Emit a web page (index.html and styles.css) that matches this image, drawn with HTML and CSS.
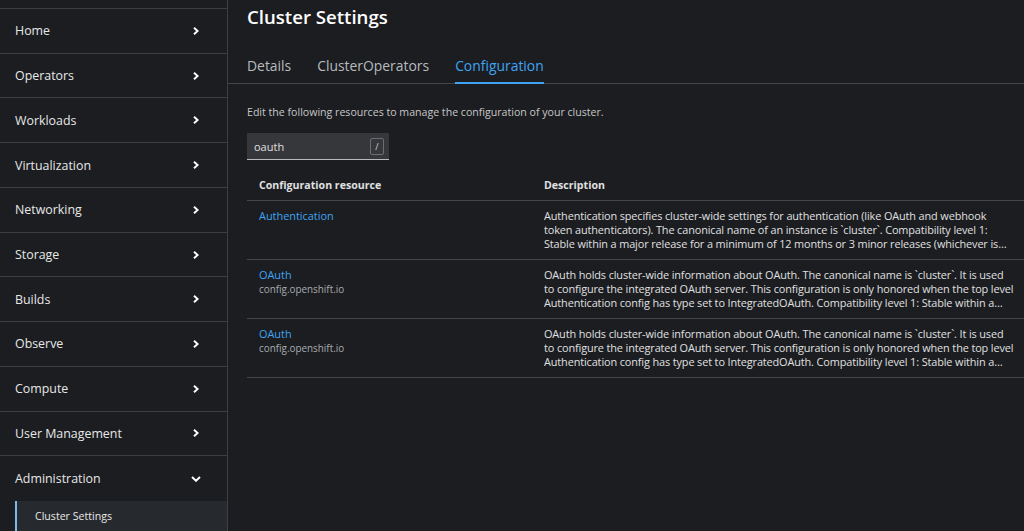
FILE: index.html
```html
<!DOCTYPE html>
<html>
<head>
<meta charset="utf-8">
<link rel="stylesheet" href="styles.css">
</head>
<body>
<div class="app">
  <nav class="sidebar">
    <div class="nav-top"></div>
    <div class="nav-item"><span>Home</span><svg class="chev" viewBox="0 0 6 8"><path d="M1 0.7 L4.6 4 L1 7.3" /></svg></div>
    <div class="nav-item"><span>Operators</span><svg class="chev" viewBox="0 0 6 8"><path d="M1 0.7 L4.6 4 L1 7.3" /></svg></div>
    <div class="nav-item"><span>Workloads</span><svg class="chev" viewBox="0 0 6 8"><path d="M1 0.7 L4.6 4 L1 7.3" /></svg></div>
    <div class="nav-item"><span>Virtualization</span><svg class="chev" viewBox="0 0 6 8"><path d="M1 0.7 L4.6 4 L1 7.3" /></svg></div>
    <div class="nav-item"><span>Networking</span><svg class="chev" viewBox="0 0 6 8"><path d="M1 0.7 L4.6 4 L1 7.3" /></svg></div>
    <div class="nav-item"><span>Storage</span><svg class="chev" viewBox="0 0 6 8"><path d="M1 0.7 L4.6 4 L1 7.3" /></svg></div>
    <div class="nav-item"><span>Builds</span><svg class="chev" viewBox="0 0 6 8"><path d="M1 0.7 L4.6 4 L1 7.3" /></svg></div>
    <div class="nav-item"><span>Observe</span><svg class="chev" viewBox="0 0 6 8"><path d="M1 0.7 L4.6 4 L1 7.3" /></svg></div>
    <div class="nav-item"><span>Compute</span><svg class="chev" viewBox="0 0 6 8"><path d="M1 0.7 L4.6 4 L1 7.3" /></svg></div>
    <div class="nav-item"><span>User Management</span><svg class="chev" viewBox="0 0 6 8"><path d="M1 0.7 L4.6 4 L1 7.3" /></svg></div>
    <div class="nav-item expanded"><span>Administration</span><svg class="chev-down" viewBox="0 0 10 6"><path d="M1 1 L5 4.8 L9 1" /></svg></div>
    <div class="subnav">
      <div class="sub-item active">Cluster Settings</div>
    </div>
  </nav>
  <main class="main">
    <h1 class="title">Cluster Settings</h1>
    <div class="tabs">
      <div class="tab">Details</div>
      <div class="tab">ClusterOperators</div>
      <div class="tab active">Configuration</div>
    </div>
    <section class="content">
      <p class="intro">Edit the following resources to manage the configuration of your cluster.</p>
      <div class="search">
        <span class="search-text">oauth</span>
        <span class="kbd">/</span>
      </div>
      <table class="table">
        <thead>
          <tr><th class="col1">Configuration resource</th><th>Description</th></tr>
        </thead>
        <tbody>
          <tr>
            <td class="col1"><a class="link">Authentication</a></td>
            <td class="desc"><div class="clamp">Authentication specifies cluster-wide settings for authentication (like OAuth and webhook<br>token authenticators). The canonical name of an instance is `cluster`. Compatibility level 1:<br>Stable within a major release for a minimum of 12 months or 3 minor releases (whichever is longer).</div></td>
          </tr>
          <tr>
            <td class="col1"><a class="link">OAuth</a><div class="group">config.openshift.io</div></td>
            <td class="desc"><div class="clamp">OAuth holds cluster-wide information about OAuth. The canonical name is `cluster`. It is used<br>to configure the integrated OAuth server. This configuration is only honored when the top level<br>Authentication config has type set to IntegratedOAuth. Compatibility level 1: Stable within a major release.</div></td>
          </tr>
          <tr>
            <td class="col1"><a class="link">OAuth</a><div class="group">config.openshift.io</div></td>
            <td class="desc"><div class="clamp">OAuth holds cluster-wide information about OAuth. The canonical name is `cluster`. It is used<br>to configure the integrated OAuth server. This configuration is only honored when the top level<br>Authentication config has type set to IntegratedOAuth. Compatibility level 1: Stable within a major release.</div></td>
          </tr>
        </tbody>
      </table>
    </section>
  </main>
</div>
</body>
</html>
```

FILE: styles.css
```css
* { box-sizing: border-box; }
html, body {
  margin: 0;
  padding: 0;
  background: #1b1d21;
  color: #e0e0e0;
  font-family: "Open Sans", "Noto Sans", sans-serif;
  height: 531px;
  overflow: hidden;
}
.app {
  display: flex;
  height: 531px;
}
.sidebar {
  width: 228px;
  flex: none;
  background: #1b1d21;
  border-right: 1px solid #3c3f42;
  display: flex;
  flex-direction: column;
}
.nav-top {
  height: 9px;
  border-bottom: 1px solid #3c3f42;
}
.nav-item {
  height: 44.8px;
  border-bottom: 1px solid #3c3f42;
  display: flex;
  align-items: center;
  justify-content: space-between;
  padding: 0 28px 0 15px;
  font-size: 12.4px;
  color: #e8e8e8;
}
.nav-item.expanded { border-bottom: none; }
.chev {
  width: 6px;
  height: 8px;
  fill: none;
  stroke: #ffffff;
  stroke-width: 1.9;
}
.chev-down {
  width: 10px;
  height: 6px;
  fill: none;
  stroke: #ffffff;
  stroke-width: 1.9;
  margin-right: -2px;
}
.subnav {
  padding-left: 15px;
}
.sub-item {
  height: 30px;
  display: flex;
  align-items: center;
  padding-left: 18px;
  font-size: 10.6px;
  color: #e8e8e8;
  background: #26292d;
  border-left: 2px solid #73bcf7;
}
.main {
  flex: 1;
  min-width: 0;
  display: flex;
  flex-direction: column;
}
.title {
  margin: 5px 0 0 19px;
  font-size: 18.6px;
  font-weight: 600;
  line-height: 24px;
  color: #ffffff;
}
.tabs {
  margin-top: 20px;
  display: flex;
  gap: 26px;
  padding-left: 19px;
  border-bottom: 1px solid #444548;
}
.tab {
  font-size: 13.9px;
  color: #b8bbbe;
  padding: 7px 0 7px;
  border-bottom: 2px solid transparent;
  margin-bottom: -1px;
}
.tab.active {
  color: #3fa4f2;
  border-bottom-color: #3fa4f2;
}
.content {
  padding: 20px 0 0 19px;
}
.intro {
  margin: 0;
  font-size: 10.6px;
  line-height: 16px;
  color: #c7c7c7;
}
.search {
  margin-top: 13px;
  width: 142px;
  height: 27px;
  background: #36373a;
  border-bottom: 1px solid #b8bbbe;
  display: flex;
  align-items: center;
  justify-content: space-between;
  padding: 0 5px 0 7px;
}
.search-text {
  font-size: 11px;
  color: #e0e0e0;
}
.kbd {
  width: 14px;
  height: 17px;
  border: 1px solid #6a6e73;
  border-radius: 2px;
  font-size: 9px;
  color: #d2d2d2;
  display: flex;
  align-items: center;
  justify-content: center;
}
.table {
  margin-top: 6px;
  width: 100%;
  border-collapse: collapse;
}
.table th {
  text-align: left;
  font-size: 10.6px;
  font-weight: 700;
  color: #e0e0e0;
  padding: 12px 12px 8px;
  border-bottom: 1px solid #444548;
}
.table th.col1, .table td.col1 { width: 285px; }
.table td {
  vertical-align: top;
  padding: 8px 12px 0;
  height: 59px;
  border-bottom: 1px solid #444548;
  font-size: 10.9px;
  line-height: 14px;
}
.table td.desc {
  padding-right: 0;
  letter-spacing: -0.12px;
}
.link {
  color: #3fa4f2;
  font-size: 10.9px;
  text-decoration: none;
}
.group {
  color: #a8abae;
  font-size: 9.9px;
  line-height: 14px;
}
.desc { color: #e0e0e0; }
.clamp {
  display: -webkit-box;
  -webkit-line-clamp: 3;
  -webkit-box-orient: vertical;
  overflow: hidden;
  max-width: 478px;
}
```
